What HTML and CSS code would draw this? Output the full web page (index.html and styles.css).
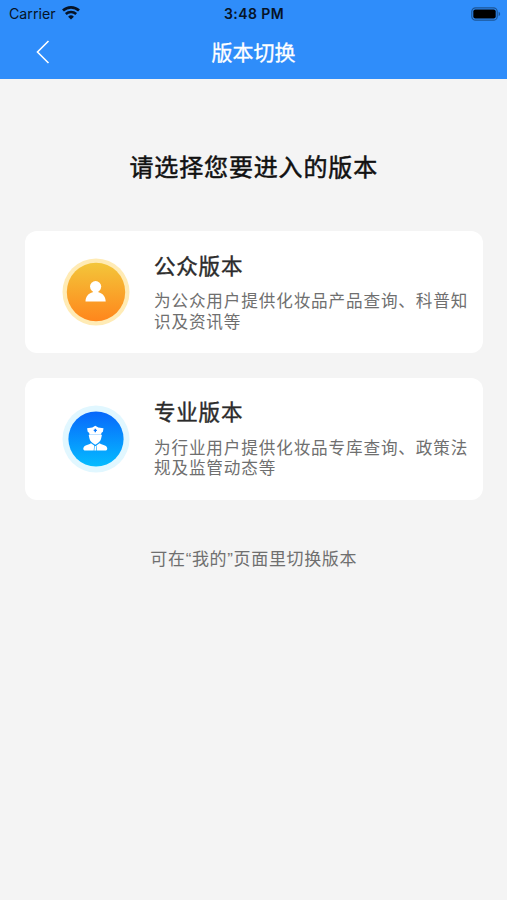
FILE: index.html
```html
<!DOCTYPE html>
<html lang="zh-CN">
<head>
    <meta charset="UTF-8">
    <meta name="viewport" content="width=device-width, initial-scale=1.0">
    <title>版本切换</title>
    <link rel="stylesheet" href="styles.css">
</head>
<body>
    <header class="header">
        <!-- Phone status bar -->
        <div class="status-bar">
            <div class="carrier">
                <span>Carrier</span>
                <svg class="wifi" viewBox="0 0 18 14" width="18" height="14">
                    <path d="M1 4.6a11.6 11.6 0 0 1 16 0" fill="none" stroke="#061326" stroke-width="2.7"/>
                    <path d="M3.8 8a7.6 7.6 0 0 1 10.4 0" fill="none" stroke="#061326" stroke-width="2.5"/>
                    <path d="M6.1 10.7a4.2 4.2 0 0 1 5.8 0L9 13.6z" fill="#061326"/>
                </svg>
            </div>
            <div class="time">3:48 PM</div>
            <div class="battery">
                <svg viewBox="0 0 30 14" width="30" height="14">
                    <rect x="0.8" y="0.8" width="25.4" height="12.4" rx="3.8" fill="none" stroke="#1c5596" stroke-width="1.2"/>
                    <rect x="2.3" y="2.4" width="22.4" height="9.2" rx="2" fill="#000"/>
                    <path d="M27.6 4.8c2 .7 2 3.7 0 4.4z" fill="#1c5596"/>
                </svg>
            </div>
        </div>
        <!-- Title bar -->
        <div class="nav-bar">
            <a class="back" href="#">
                <svg viewBox="0 0 14 24" width="14" height="24">
                    <path d="M12.5 1L1.5 12l11 11" fill="none" stroke="#fff" stroke-width="1.6"/>
                </svg>
            </a>
            <h1>版本切换</h1>
        </div>
    </header>

    <main class="content">
        <h2>请选择您要进入的版本</h2>

        <div class="card">
            <svg class="card-icon" viewBox="0 0 68 68">
                <defs>
                    <linearGradient id="orange" x1="0" y1="0" x2="0" y2="1">
                        <stop offset="0" stop-color="#f3c63a"/>
                        <stop offset="1" stop-color="#ff861c"/>
                    </linearGradient>
                </defs>
                <circle cx="34" cy="34" r="33.5" fill="#ffebb5"/>
                <circle cx="34" cy="34" r="29.2" fill="url(#orange)"/>
                <circle cx="33.6" cy="28.6" r="5.6" fill="#fff"/>
                <path d="M30.8 31h5.6v3.2c4.4 1 7.3 4.4 7.3 9.4H23.5c0-5 2.9-8.4 7.3-9.4z" fill="#fff"/>
            </svg>
            <div class="card-text">
                <h3>公众版本</h3>
                <p>为公众用户提供化妆品产品查询、科普知识及资讯等</p>
            </div>
        </div>

        <div class="card">
            <svg class="card-icon" viewBox="0 0 68 68">
                <defs>
                    <linearGradient id="blue" x1="0" y1="0" x2="0" y2="1">
                        <stop offset="0" stop-color="#0867fb"/>
                        <stop offset="1" stop-color="#05bcff"/>
                    </linearGradient>
                </defs>
                <circle cx="34" cy="34" r="33.5" fill="#e1f7ff"/>
                <circle cx="34" cy="34" r="27.6" fill="url(#blue)"/>
                <!-- Officer: cap, face, shoulders -->
                <path d="M33.3 20.8l3 1.6 5.2.8-.6 3.6-1.6 1.2v1.700H27.300V28l-1.600-1.200-.6-3.600 5.200-.8z" fill="#fff"/>
                <path d="M26.700 30.100h13.200l-.7 3.200c-.5 2.700-2.400 4.700-5.900 6.400-3.500-1.700-5.400-3.700-5.900-6.400z" fill="#fff"/>
                <path d="M29 38.200l3.200 2.300-.5 5H23.500c-3.200 0-2.700-3.800.2-5.100 1.700-.7 3.800-.8 5.300-2.200z" fill="#fff"/>
                <path d="M37.600 38.200l-3.200 2.300.5 5h8.200c3.200 0 2.700-3.800-.2-5.100-1.700-.7-3.800-.8-5.300-2.200z" fill="#fff"/>
                <path d="M32.700 41h1.200l.4 4.500h-2z" fill="#fff"/>
                <path d="M32.600 23.700h1.400v1h.9V26h-.9v1.200h-1.400V26h-.9v-1.300h.9z" fill="#0878fc"/>
            </svg>
            <div class="card-text">
                <h3>专业版本</h3>
                <p>为行业用户提供化妆品专库查询、政策法规及监管动态等</p>
            </div>
        </div>

        <p class="tip">可在“我的”页面里切换版本</p>
    </main>
</body>
</html>
```

FILE: styles.css
```css
* {
    box-sizing: border-box;
}
body {
    margin: 0;
    min-height: 900px;
    background-color: #f4f4f4;
    font-family: "Noto Sans CJK SC", sans-serif;
}
h1, h2, h3, p {
    margin: 0;
    font-weight: normal;
}
svg {
    display: block;
}
/* Blue header with status bar and title */
.header {
    height: 79px;
    background-color: #2f8dfa;
}
.status-bar {
    display: grid;
    grid-template-columns: 1fr auto 1fr;
    align-items: center;
    height: 27px;
    padding: 0 6px 0 9px;
    font-family: Inter, sans-serif;
    font-size: 14.2px;
    color: #061326;
}
.carrier {
    display: flex;
    align-items: center;
    gap: 6px;
}
.wifi {
    margin-top: -2px;
}
.time {
    margin-left: -2px;
    font-size: 14px;
    font-weight: 600;
    letter-spacing: 0.4px;
}
.battery {
    justify-self: end;
}
.nav-bar {
    display: grid;
    grid-template-columns: 80px 1fr 80px;
    align-items: center;
    height: 50px;
}
.back {
    margin-left: 36px;
}
.nav-bar h1 {
    margin-top: -2px;
    font-size: 21px;
    line-height: 30px;
    text-align: center;
    color: #fff;
    -webkit-text-stroke: 0.3px #fff;
}
/* Main area */
.content {
    padding: 69px 24.5px 0 25px;
}
.content h2 {
    margin-bottom: 47px;
    font-size: 24px;
    line-height: 36px;
    letter-spacing: 0.85px;
    text-align: center;
    color: #111;
    -webkit-text-stroke: 0.5px #111;
}
.card {
    display: flex;
    align-items: center;
    height: 122px;
    margin-bottom: 24.5px;
    padding-left: 36.5px;
    background-color: #fff;
    border-radius: 12px;
}
.card-icon {
    flex: none;
    width: 68px;
    height: 68px;
}
.card-text {
    flex: 1;
    margin: -3px 0 0 24.5px;
}
.card-text h3 {
    margin-bottom: 10.5px;
    font-size: 21.5px;
    line-height: 30px;
    letter-spacing: 0.8px;
    color: #2b2b2b;
    -webkit-text-stroke: 0.4px #2b2b2b;
}
.card-text p {
    font-size: 16.6px;
    line-height: 20.5px;
    letter-spacing: 0.86px;
    color: #6f6f6f;
}
/* Hint below the cards */
.tip {
    margin-top: 47px;
    font-family: "Liberation Sans", "Noto Sans CJK SC", sans-serif;
    font-size: 17px;
    line-height: 26px;
    letter-spacing: 0.65px;
    text-align: center;
    color: #6f6f6f;
}
```
